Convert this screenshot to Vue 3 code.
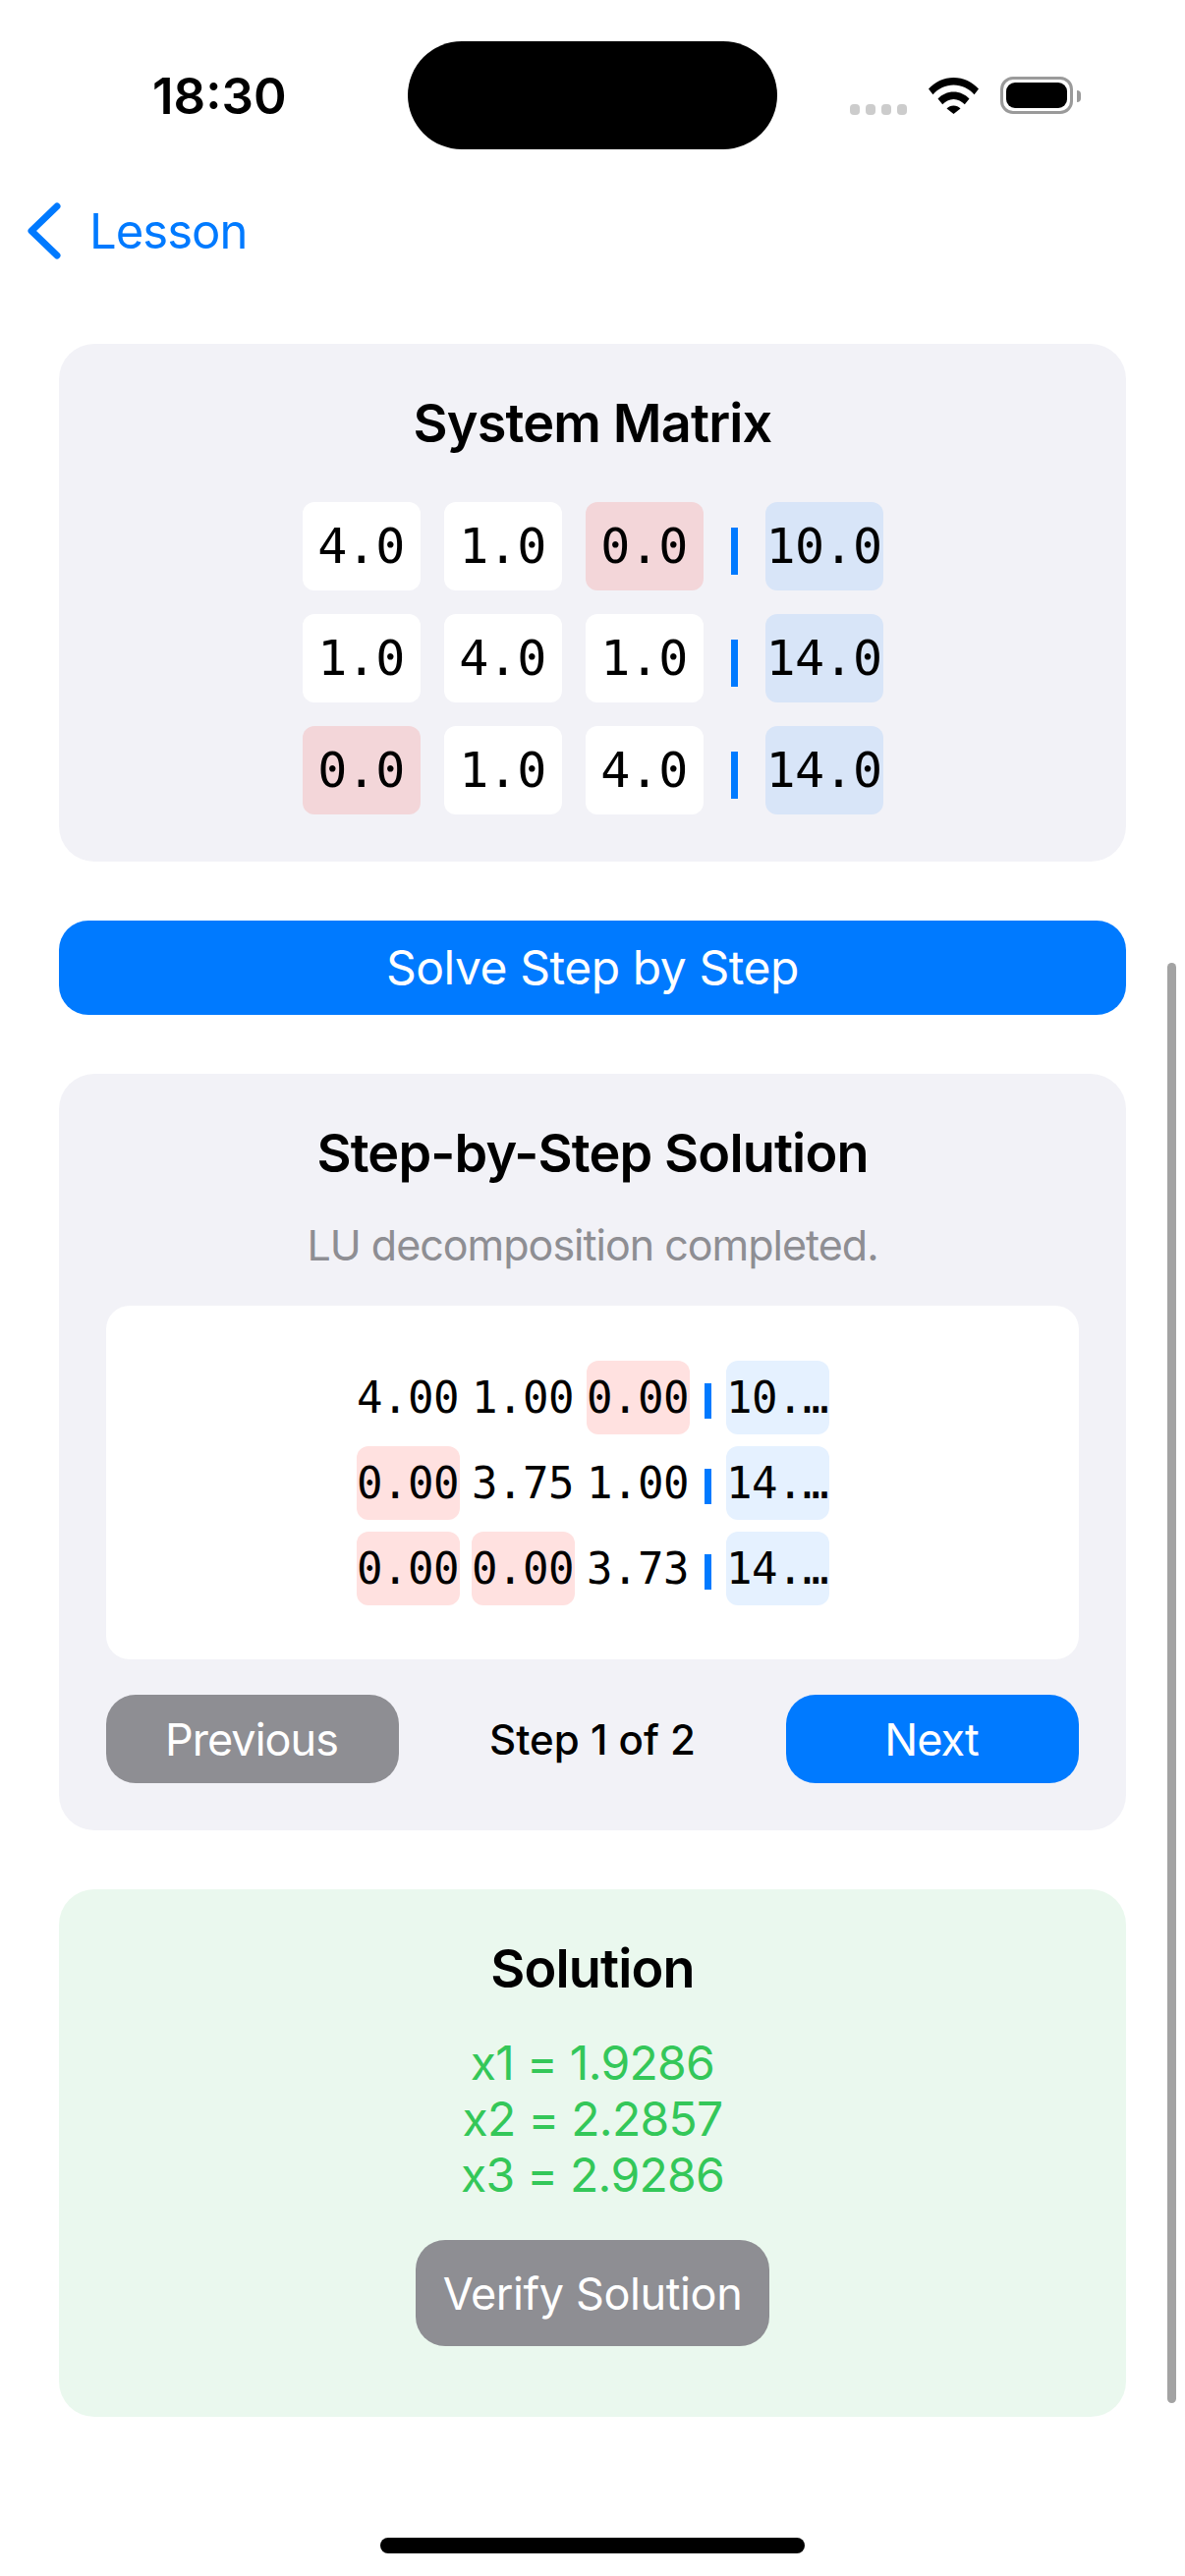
<template>
  <div class="screen">
    <!-- status bar -->
    <div class="status">
      <span class="time">18:30</span>
      <div class="island"></div>
      <div class="status-icons">
        <div class="dots"><i></i><i></i><i></i><i></i></div>
        <svg class="wifi" width="51" height="37" viewBox="0 0 51 37">
          <path d="M0 11.500C6.500 4.300 15.500 0 25.500 0s19 4.300 25.500 11.500l-4.500 5.700C41 11 33.500 7.500 25.500 7.500S10 11 4.500 17.200z" />
          <path d="M9.500 21.500C13.500 17.200 19.300 14.500 25.500 14.500s12 2.700 16 7l-4.700 5.800C33.800 24.200 29.800 22 25.500 22s-8.300 2.200-11.300 5.300z" />
          <path d="M18.500 31.500c1.800-1.900 4.300-3 7-3s5.200 1.100 7 3L25.500 37z" />
        </svg>
        <div class="battery"><div class="battery-fill"></div></div>
        <div class="battery-cap"></div>
      </div>
    </div>

    <!-- nav -->
    <div class="nav">
      <svg class="chevron" width="36" height="58" viewBox="0 0 36 58">
        <path d="M31 4 5 29 31 54" fill="none" stroke="#007aff" stroke-width="7" stroke-linecap="round" stroke-linejoin="round" />
      </svg>
      <span class="back">Lesson</span>
    </div>

    <div class="content">
      <section class="card">
        <h2 class="title">System Matrix</h2>
        <div class="matrix">
          <div v-for="(row, r) in systemRows" :key="r" class="matrix-row">
            <div v-for="(val, c) in row.cells" :key="c" class="cell" :class="{ zero: val === '0.0' }">{{ val }}</div>
            <div class="sep"></div>
            <div class="cell rhs">{{ row.rhs }}</div>
          </div>
        </div>
      </section>

      <button class="btn btn-solve">Solve Step by Step</button>

      <section class="card">
        <h2 class="title">Step-by-Step Solution</h2>
        <p class="note">LU decomposition completed.</p>
        <div class="step-box">
          <div v-for="(row, r) in stepRows" :key="r" class="step-row">
            <div v-for="(val, c) in row.cells" :key="c" class="step-cell" :class="{ zero: val === '0.00' && !(r === 0 && c < 2) }">{{ val }}</div>
            <div class="step-sep"></div>
            <div class="step-cell rhs">{{ row.rhs }}</div>
          </div>
        </div>
        <div class="pager">
          <button class="btn btn-pager gray">Previous</button>
          <span class="step-label">Step 1 of 2</span>
          <button class="btn btn-pager">Next</button>
        </div>
      </section>

      <section class="card green">
        <h2 class="title">Solution</h2>
        <div class="answers">
          <div v-for="a in answers" :key="a">{{ a }}</div>
        </div>
        <button class="btn btn-verify">Verify Solution</button>
      </section>
    </div>

    <div class="scrollbar"></div>
    <div class="home-bar"></div>
  </div>
</template>

<script setup>
const systemRows = [
  { cells: ['4.0', '1.0', '0.0'], rhs: '10.0' },
  { cells: ['1.0', '4.0', '1.0'], rhs: '14.0' },
  { cells: ['0.0', '1.0', '4.0'], rhs: '14.0' },
]
const stepRows = [
  { cells: ['4.00', '1.00', '0.00'], rhs: '10.…' },
  { cells: ['0.00', '3.75', '1.00'], rhs: '14.…' },
  { cells: ['0.00', '0.00', '3.73'], rhs: '14.…' },
]
const answers = ['x1 = 1.9286', 'x2 = 2.2857', 'x3 = 2.9286']
</script>

<style>
html, body { background: #fff; }
</style>

<style scoped>
.screen {
  position: relative;
  width: 1206px;
  height: 2622px;
  overflow: hidden;
  background: #fff;
  font-family: Inter, "Liberation Sans", sans-serif;
  color: #000;
}

.status {
  display: flex;
  align-items: flex-start;
  height: 194px;
  box-sizing: border-box;
  padding-top: 42px;
}

.time {
  width: 415px;
  box-sizing: border-box;
  padding: 36px 0 0 155px;
  font-size: 51px;
  line-height: 40px;
  font-weight: 600;
}

.island {
  width: 376px;
  height: 110px;
  border-radius: 55px;
  background: #000;
}

.status-icons {
  display: flex;
  align-items: flex-start;
  padding: 36px 0 0 74px;
}

.dots {
  display: flex;
  gap: 6px;
  margin-top: 28px;
}

.dots i {
  width: 10px;
  height: 11px;
  border-radius: 4px;
  background: #ccc;
}

.wifi {
  margin: 1px 0 0 22px;
}

.wifi path {
  fill: #000;
}

.battery {
  width: 74px;
  height: 38px;
  margin-left: 22px;
  box-sizing: border-box;
  border: 3px solid #9a9a9a;
  border-radius: 13px;
  padding: 3px;
}

.battery-fill {
  height: 100%;
  border-radius: 9px;
  background: #000;
}

.battery-cap {
  width: 4px;
  height: 12px;
  margin: 14px 0 0 4px;
  border-radius: 0 5px 5px 0;
  background: #9a9a9a;
}

.nav {
  display: flex;
  align-items: center;
  height: 82px;
  padding-left: 27px;
  gap: 28px;
}

.back {
  font-size: 49px;
  letter-spacing: -1px;
  color: #007aff;
}

.content {
  display: flex;
  flex-direction: column;
  gap: 60px;
  padding: 74px 60px 0;
}

.card {
  display: flex;
  flex-direction: column;
  align-items: center;
  box-sizing: border-box;
  padding: 48px;
  border-radius: 36px;
  background: #f2f2f7;
}

.card.green {
  padding-bottom: 72px;
  background: #eaf8ee;
}

.title {
  margin: 0;
  font-size: 54px;
  line-height: 66px;
  font-weight: 560;
  letter-spacing: -0.85px;
}

.matrix {
  display: flex;
  flex-direction: column;
  gap: 24px;
  margin-top: 47px;
}

.matrix-row {
  display: flex;
  align-items: center;
}

.cell {
  width: 120px;
  height: 90px;
  margin-right: 24px;
  border-radius: 12px;
  background: #fff;
  font-family: "DejaVu Sans Mono", monospace;
  font-size: 50px;
  letter-spacing: -0.6px;
  line-height: 90px;
  text-align: center;
}

.cell.zero {
  background: #f3d6d9;
}

.cell.rhs {
  margin-right: 0;
  background: #d8e5f8;
}

.sep {
  width: 7px;
  height: 48px;
  margin: 10px 28px 0 4px;
  background: #007aff;
}

.note {
  margin: 33px 0 0;
  font-size: 43px;
  letter-spacing: -1px;
  line-height: 54px;
  color: #8e8e93;
}

.step-box {
  display: flex;
  flex-direction: column;
  align-items: center;
  gap: 12px;
  align-self: stretch;
  margin-top: 35px;
  padding: 56px 0 55px;
  border-radius: 24px;
  background: #fff;
}

.step-row {
  display: flex;
  align-items: center;
}

.step-cell {
  width: 105px;
  height: 75px;
  margin-right: 12px;
  border-radius: 12px;
  font-family: "DejaVu Sans Mono", monospace;
  font-size: 44px;
  letter-spacing: -0.5px;
  line-height: 75px;
  text-align: center;
}

.step-cell.zero {
  background: #ffe1e0;
}

.step-cell.rhs {
  margin-right: 0;
  background: #e5f1ff;
}

.step-sep {
  width: 7px;
  height: 36px;
  margin: 6px 15px 0 3px;
  background: #007aff;
}

.pager {
  display: flex;
  align-items: center;
  justify-content: space-between;
  align-self: stretch;
  margin-top: 36px;
}

.step-label {
  font-size: 42px;
  font-weight: 500;
}

.btn {
  display: block;
  border: 0;
  border-radius: 30px;
  background: #007aff;
  color: #fff;
  font-family: inherit;
  font-size: 48px;
  letter-spacing: -0.45px;
  padding: 0;
}

.btn-solve {
  width: 100%;
  height: 96px;
  padding-bottom: 2px;
}

.btn-pager {
  width: 298px;
  height: 90px;
  font-size: 45px;
  letter-spacing: -1px;
  padding-right: 2px;
}

.gray {
  background: #8e8e93;
}

.answers {
  margin-top: 34px;
  font-size: 48px;
  letter-spacing: -0.7px;
  line-height: 57px;
  text-align: center;
  color: #34c759;
}

.btn-verify {
  width: 360px;
  height: 108px;
  margin-top: 38px;
  font-size: 45px;
  letter-spacing: -0.4px;
  background: #8e8e93;
}

.scrollbar {
  position: absolute;
  left: 1188px;
  top: 980px;
  width: 9px;
  height: 1466px;
  border-radius: 5px;
  background: #a3a3a3;
}

.home-bar {
  position: absolute;
  left: 387px;
  top: 2583px;
  width: 432px;
  height: 16px;
  border-radius: 8px;
  background: #000;
}
</style>
